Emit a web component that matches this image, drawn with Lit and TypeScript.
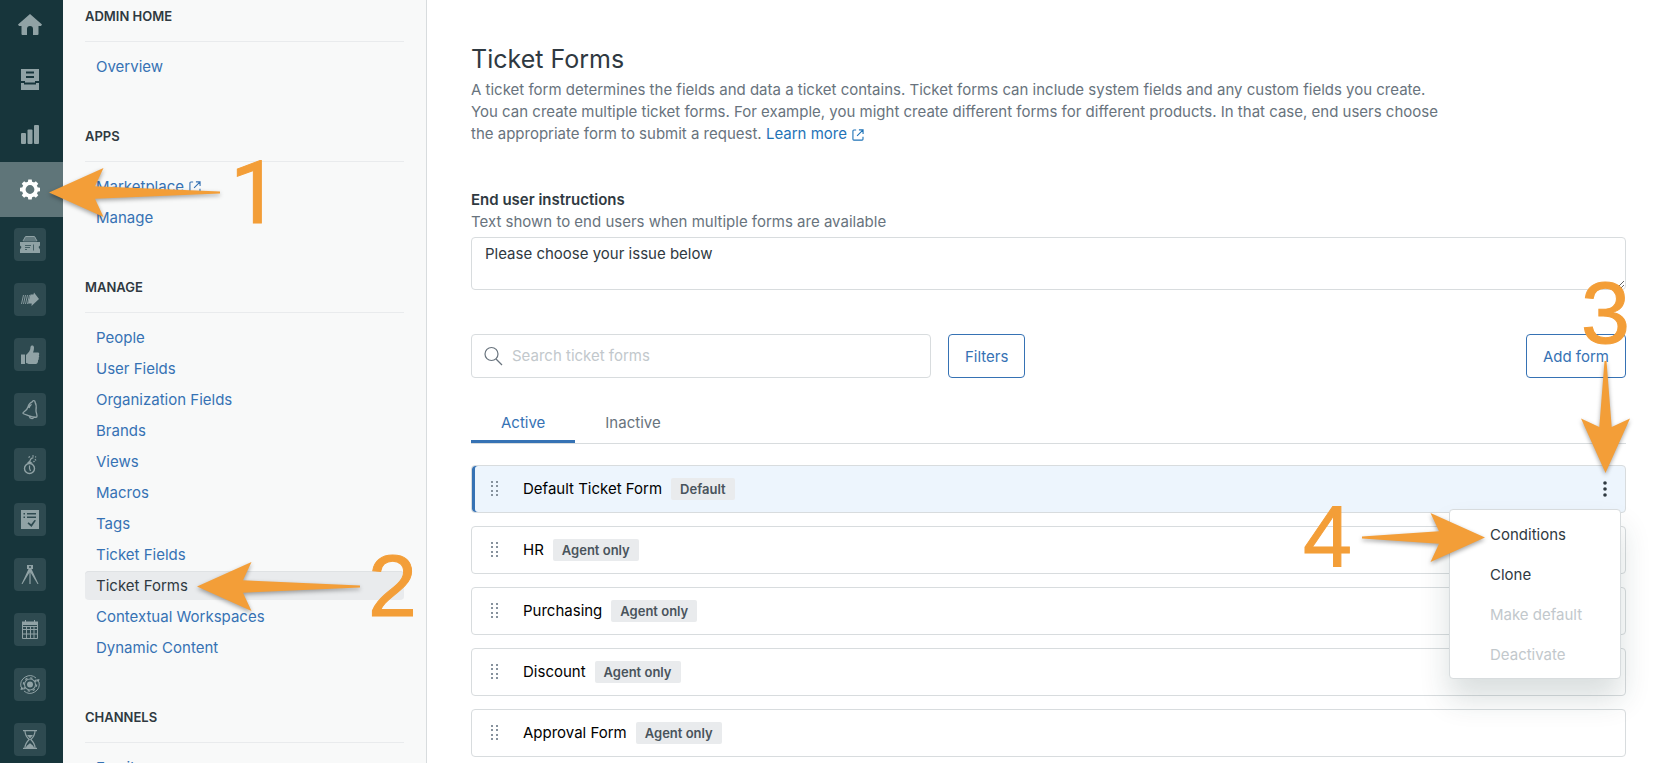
import { LitElement, html, css, svg, nothing } from "lit";
import { customElement, property, state } from "lit/decorators.js";
import { classMap } from "lit/directives/class-map.js";

interface RailItem {
  name: string;
  app?: boolean;
  current?: boolean;
  art: unknown;
}

const railItems: RailItem[] = [
  {
    name: "Home",
    art: svg`<path fill="currentColor" d="M16 6 28 16.500 27 18h-2.500v8a1 1 0 0 1-1 1H19v-6a3 3 0 0 0-6 0v6H8.500a1 1 0 0 1-1-1v-8H5l-1-1.500z"/>`,
  },
  {
    name: "Views",
    art: svg`<path fill="currentColor" fill-rule="evenodd" d="M7 6h18v12h-4v1.500h-10V18H7zM12 8.500h8v2h-8zM12 13h8v2h-8zM7 20h3v1.500h12V20h3v7H7z"/>`,
  },
  {
    name: "Reporting",
    art: svg`<g fill="currentColor"><rect x="7" y="15" width="5" height="11" rx="1"/><rect x="13.500" y="11.500" width="5" height="14.500" rx="1"/><rect x="20" y="7" width="5" height="19" rx="1"/></g>`,
  },
  {
    name: "Admin",
    current: true,
    art: svg`<circle cx="16" cy="16.500" r="6.200" fill="none" stroke="currentColor" stroke-width="3.600"/><g fill="currentColor">${[0, 45, 90, 135, 180, 225, 270, 315].map(
      (a) => svg`<path d="M13.800 9.500 14.300 6.500h3.400l.5 3z" transform="rotate(${a} 16 16.500)"/>`
    )}</g>`,
  },
  {
    name: "Ticket app",
    app: true,
    art: svg`<path fill="none" stroke="currentColor" stroke-width="1" d="M9 13 11.500 8.500h9l2.500 4.500"/><path fill="currentColor" opacity=".55" d="M9 13.500 11 9h10l2 4.500z"/><path fill="currentColor" d="M6 14h20v3.500l-1.500 1.500 1.500 2.500V25H6v-3.500L7.500 19 6 17.500z"/><path fill="none" stroke="#2e4a50" stroke-width="1" opacity=".75" d="M11 17.500h6M11 19.500h5M11 21.500h2M19.500 16.500v6"/>`,
  },
  {
    name: "Forwarding app",
    app: true,
    art: svg`<path fill="currentColor" d="M16.500 11.500h3L20 9.500l5 6.500-7.500 7 .2-2.500H14z"/><path fill="none" stroke="currentColor" stroke-width=".9" d="m9.500 12-2 9M11.500 12l-2 9M13.500 12l-2 9M15.500 12l-2 9"/>`,
  },
  {
    name: "Feedback app",
    app: true,
    art: svg`<path fill="currentColor" d="M7 16.500h4V26H7zM12 17c3-2.500 4.500-5 4.500-8 0-2 3.500-2.500 3.500.5 0 2-.5 4-1 5h5c1.500 0 1.500 2 .8 2.700.6.800.5 2-.2 2.600.4.900.2 2-.6 2.500.3 1.200-.4 3.700-2 3.700h-6c-1.500 0-2.500-.5-4-1z"/>`,
  },
  {
    name: "Alerts app",
    app: true,
    art: svg`<path fill="none" stroke="currentColor" stroke-width="1.300" stroke-linejoin="round" d="M9 20.500c-1-1.500 4-2.500 5-6.500.8-3 2.500-4.500 4.500-5.300.3-1.700 2.700-1.200 2.500.4 1.300 2 1.400 4.900 1 7.900-.3 3 2 5.500.7 7.200-2.500.3-5-.4-7.500-1.300-2.500-.9-4.500-1.400-6.200-2.400zM15.500 23.500c0 2 3.500 3 4.200.9M15 15c.6-2 1.400-3 2.500-3.800"/>`,
  },
  {
    name: "Deadline app",
    app: true,
    art: svg`<circle cx="15.500" cy="20.500" r="5" fill="none" stroke="currentColor" stroke-width="1.400"/><path fill="currentColor" d="m12.500 15.500 3-3 3.500 3z"/><path fill="none" stroke="currentColor" stroke-width="1.200" d="M15.500 17.500v3l1 2.500M16 13c.4-2 2-3.500 3.500-3M14.500 9.500l1.500-1M18 8h2M21 11l1 1.500M20.500 13l-1 1M22 8.500l-.8.800"/>`,
  },
  {
    name: "Checklist app",
    app: true,
    art: svg`<path fill="currentColor" fill-rule="evenodd" d="M7 7h18v19H7zM9.500 10v1.500H11V10zM13 10v1.500h9V10zM9.500 13.500V15H11v-1.500zM13 13.500V15h9v-1.500zM14.500 19.200l-1 1.300 4 3.500 4.500-6.500-1.500-.5-3.300 4.300z"/>`,
  },
  {
    name: "Drafting app",
    app: true,
    art: svg`<path fill="currentColor" d="M13 7h6v4h-1.500L24.500 26h-1L16.500 14.500h-1L8.500 26h-1L14.500 11H13z"/><path fill="#2e4a50" d="M15 8.300h2v1.400h-2z"/><path fill="none" stroke="currentColor" stroke-width="1.200" d="M16 12v14"/>`,
  },
  {
    name: "Calendar app",
    app: true,
    art: svg`<path fill="currentColor" d="M8 8.500h16V12H8z"/><path fill="none" stroke="currentColor" d="M8.500 12v13.500h15V12M8.500 16.500h15M8.500 21h15M12.500 13v12M16.500 13v12M20 13v12M8.500 13.500h15M11.500 7v3M20.500 7v3"/>`,
  },
  {
    name: "Automation app",
    app: true,
    art: svg`<circle cx="16" cy="16.500" r="3" fill="currentColor"/><circle cx="16" cy="16.500" r="5.500" fill="none" stroke="currentColor" stroke-width="1.100"/><circle cx="16" cy="16.500" r="6.600" fill="none" stroke="currentColor" stroke-width="1.300" stroke-dasharray="2.300 2.880"/><path fill="none" stroke="currentColor" stroke-width="1" d="M7 19a9.200 9.200 0 0 1 15-9M25 14a9.200 9.200 0 0 1-15 9"/><path fill="currentColor" d="m21.500 11.800 4-.8-.8 3.500zM10.500 21.200l-4 .8.800-3.500z"/>`,
  },
  {
    name: "Timer app",
    app: true,
    art: svg`<path fill="none" stroke="currentColor" stroke-width="1.200" d="M9 7.600h14M9 25.400h14M11 8c0 4 1 5.500 4.200 8.500C12 19.500 11 21 11 25M21 8c0 4-1 5.500-4.200 8.500C20 19.500 21 21 21 25"/><path fill="currentColor" d="M13 12h6l-3 3.500zM12 25c0-2.500 2.500-3 4-5 1.500 2 4 2.500 4 5z"/>`,
  },
];

interface NavLink {
  text: string;
  external?: boolean;
  current?: boolean;
}

const navSections: { title: string; links: NavLink[] }[] = [
  { title: "ADMIN HOME", links: [{ text: "Overview" }] },
  { title: "APPS", links: [{ text: "Marketplace", external: true }, { text: "Manage" }] },
  {
    title: "MANAGE",
    links: [
      { text: "People" },
      { text: "User Fields" },
      { text: "Organization Fields" },
      { text: "Brands" },
      { text: "Views" },
      { text: "Macros" },
      { text: "Tags" },
      { text: "Ticket Fields" },
      { text: "Ticket Forms", current: true },
      { text: "Contextual Workspaces" },
      { text: "Dynamic Content" },
    ],
  },
  { title: "CHANNELS", links: [{ text: "Email" }] },
];

const forms = [
  { name: "Default Ticket Form", tag: "Default" },
  { name: "HR", tag: "Agent only" },
  { name: "Purchasing", tag: "Agent only" },
  { name: "Discount", tag: "Agent only" },
  { name: "Approval Form", tag: "Agent only" },
];

const externalIcon = html`<svg class="external" width="12" height="12" viewBox="0 0 13 13" fill="none" stroke="currentColor" stroke-width="1.200" aria-hidden="true">
  <path d="M4.500 1.100H2a1 1 0 0 0-1 1V11a1 1 0 0 0 1 1h8.900a1 1 0 0 0 1-1V8.500M7.500 1H12v4.500M12 1 5.500 7.500" />
</svg>`;

@customElement("icon-rail")
class IconRail extends LitElement {
  static styles = css`
    :host {
      display: block;
      width: 63px;
      overflow: hidden;
      background: #17353b;
    }
    .list {
      margin-top: -3px;
    }
    .item {
      display: flex;
      align-items: center;
      justify-content: center;
      height: 55px;
      padding-right: 3px;
      box-sizing: border-box;
      color: #90a2a5;
    }
    .current {
      background: #5f7579;
      color: #fff;
    }
    .tile {
      display: block;
      border-radius: 4px;
    }
    .app {
      background: #2e4a50;
    }
  `;

  render() {
    return html`<nav class="list" aria-label="Products">
      ${railItems.map(
        (i) => html`<a href="#" class=${classMap({ item: true, current: !!i.current })} aria-label=${i.name}>
          <svg class=${classMap({ tile: true, app: !!i.app })} width="32" height="33" viewBox="0 0 32 33">${i.art}</svg>
        </a>`
      )}
    </nav>`;
  }
}

@customElement("admin-nav")
class AdminNav extends LitElement {
  static styles = css`
    :host {
      display: block;
      width: 364px;
      box-sizing: border-box;
      padding: 6px 22px 0 22px;
      overflow: hidden;
      background: #f8f9f9;
      border-right: 1px solid #d8dcde;
    }
    .section {
      margin-bottom: 45px;
    }
    .title {
      margin: 0;
      padding-bottom: 15px;
      border-bottom: 1px solid #e9ebed;
      font-size: 13px;
      line-height: 20px;
      font-weight: 600;
      color: #2f3941;
    }
    .links {
      display: grid;
      gap: 2px;
      margin: 0;
      padding: 10px 0 0 0;
      list-style: none;
    }
    .link {
      display: block;
      padding: 0 11px;
      border-radius: 4px;
      font-size: 15px;
      line-height: 29px;
      color: #3672b4;
      text-decoration: none;
    }
    .current {
      background: #e9ebed;
      color: #2f3941;
      box-shadow: inset 0 1px #dfe2e4;
    }
    .external {
      margin-left: 5px;
      vertical-align: -1px;
    }
  `;

  render() {
    return navSections.map(
      (s) => html`<section class="section">
        <h2 class="title">${s.title}</h2>
        <ul class="links">
          ${s.links.map(
            (l) => html`<li>
              <a href="#" class=${classMap({ link: true, current: !!l.current })}>${l.text}${l.external ? externalIcon : nothing}</a>
            </li>`
          )}
        </ul>
      </section>`
    );
  }
}

@customElement("callout-arrow")
class CalloutArrow extends LitElement {
  static styles = css`
    :host {
      display: block;
      pointer-events: none;
    }
    .arrow {
      display: block;
      overflow: visible;
      filter: drop-shadow(0 2px 2px rgba(0, 0, 0, 0.35));
    }
  `;

  @property({ type: Number }) length = 160;
  @property() direction: "left" | "right" | "down" = "left";

  render() {
    const n = this.length;
    const down = this.direction === "down";
    const turn =
      this.direction === "right" ? `translate(${n} 0) scale(-1 1)` : down ? `translate(0 ${n}) rotate(-90)` : "";
    return html`<svg class="arrow" width=${down ? 49 : n} height=${down ? n : 49} aria-hidden="true">
      <path fill="#f39e38" transform=${turn} d="M0 24.500 54.500 0 46 18.300 ${n} 23.500V25.500L46 30.700 54.500 49z" />
    </svg>`;
  }
}

@customElement("form-list")
class FormList extends LitElement {
  static styles = css`
    :host {
      display: block;
    }
    .list {
      display: grid;
      gap: 13px;
      margin: 0;
      padding: 0;
      list-style: none;
    }
    .card {
      position: relative;
      display: flex;
      align-items: center;
      height: 48px;
      box-sizing: border-box;
      padding: 0 9px 0 18px;
      border: 1px solid #d8dcde;
      border-radius: 4px;
      background: #fff;
      font-size: 15px;
      color: #000;
    }
    .selected {
      background: #edf5fd;
      box-shadow: inset 3px 0 #3672b4;
      z-index: 1;
    }
    .grip {
      margin-right: 24px;
      color: #87929d;
    }
    .tag {
      margin-left: 9px;
      padding: 0 9px;
      border-radius: 2px;
      background: #e9ebed;
      font-size: 13px;
      line-height: 22px;
      font-weight: 600;
      color: #49545c;
    }
    .more {
      display: flex;
      margin-left: auto;
      padding: 8px;
      border: 0;
      background: none;
      color: #2f3941;
    }
    .menu {
      position: absolute;
      top: 43px;
      right: 4px;
      width: 172px;
      box-sizing: border-box;
      padding: 5px 0 3px;
      border: 1px solid #d8dcde;
      border-radius: 4px;
      background: #fff;
      box-shadow: 0 20px 30px rgba(23, 53, 59, 0.16);
    }
    .option {
      display: block;
      width: 100%;
      padding: 0 40px;
      border: 0;
      background: none;
      font: inherit;
      line-height: 40px;
      text-align: left;
      white-space: nowrap;
      color: #2f3941;
    }
    .option:disabled {
      color: #c2c8cc;
    }
  `;

  render() {
    return html`<ul class="list">
      ${forms.map(
        (f, i) => html`<li class=${classMap({ card: true, selected: i === 0 })}>
          <svg class="grip" width="9" height="16" viewBox="0 0 9 16" fill="currentColor" aria-hidden="true">
            ${[0, 4, 9, 13].map((y) => svg`<rect x="1" y=${y} width="2" height="2"/><rect x="6" y=${y} width="2" height="2"/>`)}
          </svg>
          <span>${f.name}</span><span class="tag">${f.tag}</span>
          ${i === 0
            ? html`<button class="more" type="button" aria-label="Form actions" aria-haspopup="menu">
                  <svg width="6" height="18" viewBox="0 0 6 18" fill="currentColor">
                    <circle cx="3" cy="3" r="1.800" /><circle cx="3" cy="9" r="1.800" /><circle cx="3" cy="15" r="1.800" />
                  </svg>
                </button>
                <div class="menu" role="menu">
                  <button class="option" role="menuitem">Conditions</button>
                  <button class="option" role="menuitem">Clone</button>
                  <button class="option" role="menuitem" disabled>Make default</button>
                  <button class="option" role="menuitem" disabled>Deactivate</button>
                </div>`
            : nothing}
        </li>`
      )}
    </ul>`;
  }
}

@customElement("app-root")
class AppRoot extends LitElement {
  static styles = css`
    :host {
      position: relative;
      display: grid;
      grid-template-columns: auto auto minmax(0, 1fr);
      height: 100vh;
      overflow: hidden;
      background: #fff;
      font-family: Inter, "Liberation Sans", sans-serif;
      font-size: 15px;
      line-height: 22px;
      color: #2f3941;
    }
    .main {
      padding: 40px 30px 0 44px;
      overflow: hidden;
    }
    .heading {
      margin: 0;
      font-size: 25px;
      line-height: 38px;
      font-weight: 400;
    }
    .intro {
      max-width: 970px;
      margin: 0 0 44px;
      padding-top: 1px;
      color: #68737d;
    }
    .link {
      color: #1f73b7;
      text-decoration: none;
    }
    .external {
      margin-left: 5px;
      vertical-align: -2px;
    }
    .label {
      display: block;
      font-weight: 600;
    }
    .hint {
      margin: 0 0 4px;
      color: #68737d;
    }
    .instructions {
      display: block;
      width: 100%;
      height: 53px;
      box-sizing: border-box;
      padding: 5px 13px;
      border: 1px solid #d8dcde;
      border-radius: 4px;
      font: inherit;
      color: inherit;
      resize: vertical;
      outline: none;
    }
    .toolbar {
      display: flex;
      gap: 17px;
      margin-top: 44px;
    }
    .search {
      display: flex;
      align-items: center;
      gap: 9px;
      flex: 0 1 460px;
      height: 44px;
      box-sizing: border-box;
      padding: 0 12px;
      border: 1px solid #d8dcde;
      border-radius: 4px;
      color: #68737d;
    }
    .query {
      flex: 1;
      min-width: 0;
      padding: 0;
      border: 0;
      outline: none;
      background: none;
      font: inherit;
      color: #2f3941;
    }
    .query::placeholder {
      color: #c2c8cc;
    }
    .button {
      padding: 2px 16px 0;
      border: 1px solid #3672b4;
      border-radius: 4px;
      background: #fff;
      font: inherit;
      color: #3672b4;
    }
    .add {
      margin-left: auto;
    }
    .tabs {
      display: flex;
      margin: 22px 0 21px;
      border-bottom: 1px solid #d8dcde;
    }
    .tab {
      padding: 12px 30px 6px;
      border: 0;
      border-bottom: 3px solid transparent;
      background: none;
      font: inherit;
      color: #68737d;
    }
    .tab-active {
      border-color: #3672b4;
      color: #3672b4;
    }
    .mark {
      position: absolute;
      z-index: 2;
      font-family: "Liberation Sans", Arial, sans-serif;
      font-size: 88px;
      line-height: 88px;
      color: #f39e38;
      -webkit-text-stroke: 1px #f39e38;
      pointer-events: none;
    }
    .digit-one {
      top: 149px;
      left: 230px;
      font-family: Roboto, sans-serif;
    }
    .digit-two {
      top: 542px;
      left: 368px;
    }
    .digit-three {
      top: 269px;
      right: 26px;
    }
    .digit-four {
      top: 493px;
      right: 304px;
    }
    .arrow-one {
      top: 168px;
      left: 49px;
    }
    .arrow-two {
      top: 562px;
      left: 197px;
    }
    .arrow-three {
      top: 361px;
      right: 26px;
    }
    .arrow-four {
      top: 513px;
      right: 171px;
    }
  `;

  @state() private tab = "Active";

  render() {
    return html`
      <icon-rail></icon-rail>
      <admin-nav></admin-nav>
      <main class="main">
        <h1 class="heading">Ticket Forms</h1>
        <p class="intro">
          A ticket form determines the fields and data a ticket contains. Ticket forms can include system fields and any
          custom fields you create. You can create multiple ticket forms. For example, you might create different forms
          for different products. In that case, end users choose the appropriate form to submit a request.
          <a class="link" href="#">Learn more${externalIcon}</a>
        </p>
        <label class="label" for="instructions">End user instructions</label>
        <p class="hint" id="hint">Text shown to end users when multiple forms are available</p>
        <textarea class="instructions" id="instructions" aria-describedby="hint" .value=${"Please choose your issue below"}></textarea>
        <div class="toolbar">
          <label class="search">
            <svg width="19" height="20" viewBox="0 0 19 20" fill="none" stroke="currentColor" stroke-width="1.200" role="img" aria-label="Search">
              <circle cx="7.500" cy="8" r="6.500" /><path d="m12 13 6 6" />
            </svg>
            <input class="query" type="text" placeholder="Search ticket forms" />
          </label>
          <button class="button" type="button">Filters</button>
          <button class="button add" type="button">Add form</button>
        </div>
        <div class="tabs" role="tablist">
          ${["Active", "Inactive"].map(
            (t) => html`<button
              class=${classMap({ tab: true, "tab-active": this.tab === t })}
              role="tab"
              aria-selected=${this.tab === t ? "true" : "false"}
              @click=${() => (this.tab = t)}
            >${t}</button>`
          )}
        </div>
        <form-list></form-list>
      </main>
      <span class="mark digit-one">1</span>
      <callout-arrow class="mark arrow-one" length="171"></callout-arrow>
      <span class="mark digit-two">2</span>
      <callout-arrow class="mark arrow-two" length="163"></callout-arrow>
      <span class="mark digit-three">3</span>
      <callout-arrow class="mark arrow-three" length="112" direction="down"></callout-arrow>
      <span class="mark digit-four">4</span>
      <callout-arrow class="mark arrow-four" length="123" direction="right"></callout-arrow>
    `;
  }
}
